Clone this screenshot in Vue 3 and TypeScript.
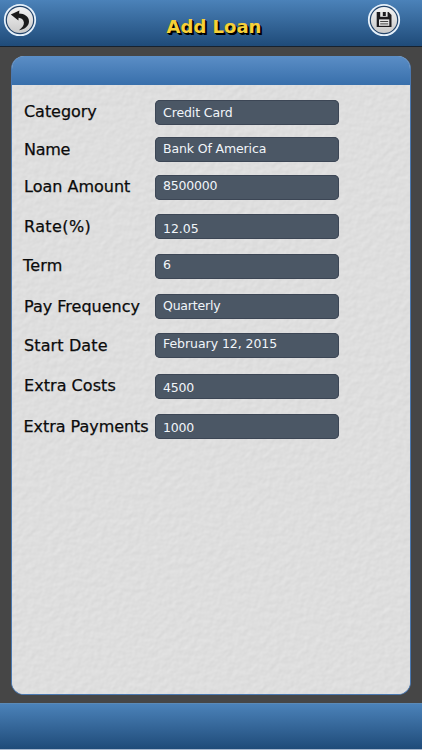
<script setup lang="ts">
interface Row {
  label: string
  value: string
  gap: number
  inset: number
  labelLine: number
  valueLine: number
  labelSpacing: number
  valueSpacing: number
}

const rows: Row[] = [
  { label: 'Category', value: 'Credit Card', gap: 15, inset: 12, labelLine: 24, valueLine: 25, labelSpacing: -0.05, valueSpacing: -0.1 },
  { label: 'Name', value: 'Bank Of America', gap: 12, inset: 12, labelLine: 25, valueLine: 23, labelSpacing: -0.3, valueSpacing: -0.13 },
  { label: 'Loan Amount', value: '8500000', gap: 13, inset: 12, labelLine: 24, valueLine: 21, labelSpacing: 0, valueSpacing: -0.2 },
  { label: 'Rate(%)', value: '12.05', gap: 14, inset: 12, labelLine: 25, valueLine: 29, labelSpacing: 0.4, valueSpacing: -0.05 },
  { label: 'Term', value: '6', gap: 15, inset: 11, labelLine: 23, valueLine: 21, labelSpacing: 0.2, valueSpacing: 0 },
  { label: 'Pay Frequency', value: 'Quarterly', gap: 15, inset: 12, labelLine: 25, valueLine: 23, labelSpacing: 0, valueSpacing: -0.2 },
  { label: 'Start Date', value: 'February 12, 2015', gap: 14, inset: 12, labelLine: 25, valueLine: 21, labelSpacing: 0.12, valueSpacing: -0.05 },
  { label: 'Extra Costs', value: '4500', gap: 16, inset: 12, labelLine: 24, valueLine: 27, labelSpacing: 0.05, valueSpacing: -0.2 },
  { label: 'Extra Payments', value: '1000', gap: 15, inset: 11.5, labelLine: 25, valueLine: 27, labelSpacing: -0.04, valueSpacing: -0.2 },
]
</script>

<template>
  <div class="screen">
    <header class="bar top">
      <button class="round" aria-label="Back">
        <svg viewBox="0 0 34 34" width="34" height="34">
          <defs>
            <linearGradient id="face" x1="0" y1="0" x2="0" y2="1">
              <stop offset="0" stop-color="#f4f4f4" />
              <stop offset="1" stop-color="#c9c9c9" />
            </linearGradient>
          </defs>
          <circle cx="17" cy="17" r="15.2" fill="#24456b" stroke="#e6f1fb" stroke-width="1.8" />
          <circle cx="17" cy="17" r="13.1" fill="url(#face)" />
          <path d="M7.8 11.6 L16.4 7.4 L16.1 10.6 C21.5 10.6 25.9 13.8 26 18.2 C26 22.8 22.2 26.2 16 27.2 C19.3 25 21.1 22.3 20.9 19.6 C20.6 16.6 18.2 15 15.6 14.8 L15.4 17.6 Z" fill="#1b1b1b" />
        </svg>
      </button>
      <h1 class="title">Add Loan</h1>
      <button class="round" aria-label="Save">
        <svg viewBox="0 0 34 34" width="34" height="34">
          <circle cx="17" cy="17" r="15.2" fill="#24456b" stroke="#e6f1fb" stroke-width="1.8" />
          <circle cx="17" cy="17" r="13.1" fill="url(#face)" />
          <path d="M9.7 9 H21.6 L24.5 12 V24 H9.7 Z" fill="#1d1b1e" />
          <path d="M13.2 9 H20.6 V13.8 H13.2 Z" fill="#e4e4e4" />
          <path d="M15.8 9 H18.8 V13 H15.8 Z" fill="#1d1b1e" />
          <path d="M12 16.4 H22.3 V22.8 H12 Z" fill="#e4e4e4" />
          <path d="M13.2 18.5 H21.2 M13.2 20.9 H21.2" stroke="#333" stroke-width="0.9" />
        </svg>
      </button>
    </header>

    <main class="panel">
      <div class="cap"></div>
      <section class="paper">
        <svg class="grain" width="398" height="610" aria-hidden="true">
          <filter id="paper" x="0" y="0" width="100%" height="100%" color-interpolation-filters="sRGB">
            <feTurbulence type="fractalNoise" baseFrequency="0.16" numOctaves="2" seed="8" result="n" />
            <feDiffuseLighting in="n" lighting-color="#ffffff" surfaceScale="0.12" diffuseConstant="1.038">
              <feDistantLight azimuth="235" elevation="57" />
            </feDiffuseLighting>
          </filter>
          <rect width="398" height="610" filter="url(#paper)" />
        </svg>
        <div class="form">
          <div v-for="row in rows" :key="row.label" class="row" :style="{ marginTop: row.gap + 'px' }">
            <label
              class="label"
              :style="{ paddingLeft: row.inset + 'px', lineHeight: row.labelLine + 'px', letterSpacing: row.labelSpacing + 'px' }"
            >{{ row.label }}</label>
            <div class="field" :style="{ lineHeight: row.valueLine + 'px', letterSpacing: row.valueSpacing + 'px' }">{{ row.value }}</div>
          </div>
        </div>
      </section>
    </main>

    <footer class="bar bottom"></footer>
  </div>
</template>

<style>
body {
  margin: 0;
}
</style>

<style scoped>
.screen {
  width: 422px;
  height: 750px;
  display: flex;
  flex-direction: column;
  background: #464646;
  font-family: Verdana, "DejaVu Sans", sans-serif;
  overflow: hidden;
}

.bar {
  box-sizing: border-box;
  flex: none;
  background: linear-gradient(#4b82b9, #1f4b79);
}

.top {
  height: 47px;
  display: flex;
  justify-content: space-between;
  align-items: flex-start;
  padding: 3px 21px 0 3px;
  border-bottom: 1px solid #17222f;
}

.round {
  width: 34px;
  height: 34px;
  padding: 0;
  border: 0;
  background: none;
}

.round svg {
  display: block;
}

.title {
  margin: 0;
  padding: 11px 0 0 24px;
  font-size: 18px;
  line-height: 26px;
  font-weight: bold;
  color: #f7d038;
  text-shadow: 1px 1px 0 #000, 2px 2px 0 #000;
}

.panel {
  box-sizing: border-box;
  width: 400px;
  height: 639px;
  margin: 9px 0 0 11px;
  flex: none;
  border: 1px solid #4a78b0;
  border-top: 0;
  border-radius: 13px;
  overflow: hidden;
  background: #dedede;
}

.cap {
  height: 29px;
  background: linear-gradient(#5b8ec6, #386fab);
}

.paper {
  position: relative;
  height: 609px;
}

.grain {
  position: absolute;
  inset: 0;
}

.form {
  position: relative;
  display: flex;
  flex-direction: column;
}

.row {
  display: grid;
  grid-template-columns: 143px 184px;
  height: 25px;
}

.label {
  font-size: 16px;
  color: #0b0b0b;
  -webkit-text-stroke: 0.25px #0b0b0b;
  white-space: nowrap;
}

.field {
  box-sizing: border-box;
  height: 24.5px;
  padding-left: 8px;
  font-size: 12.5px;
  color: #f1f5f9;
  white-space: nowrap;
  background: #4b5765;
  border-radius: 5px;
  box-shadow: inset 0 0 0 1px #3c4655;
}

.bottom {
  margin-top: 8px;
  height: 47px;
  border-top: 1px solid #5a8ab8;
  border-bottom: 1px solid #a9b9cf;
}
</style>
